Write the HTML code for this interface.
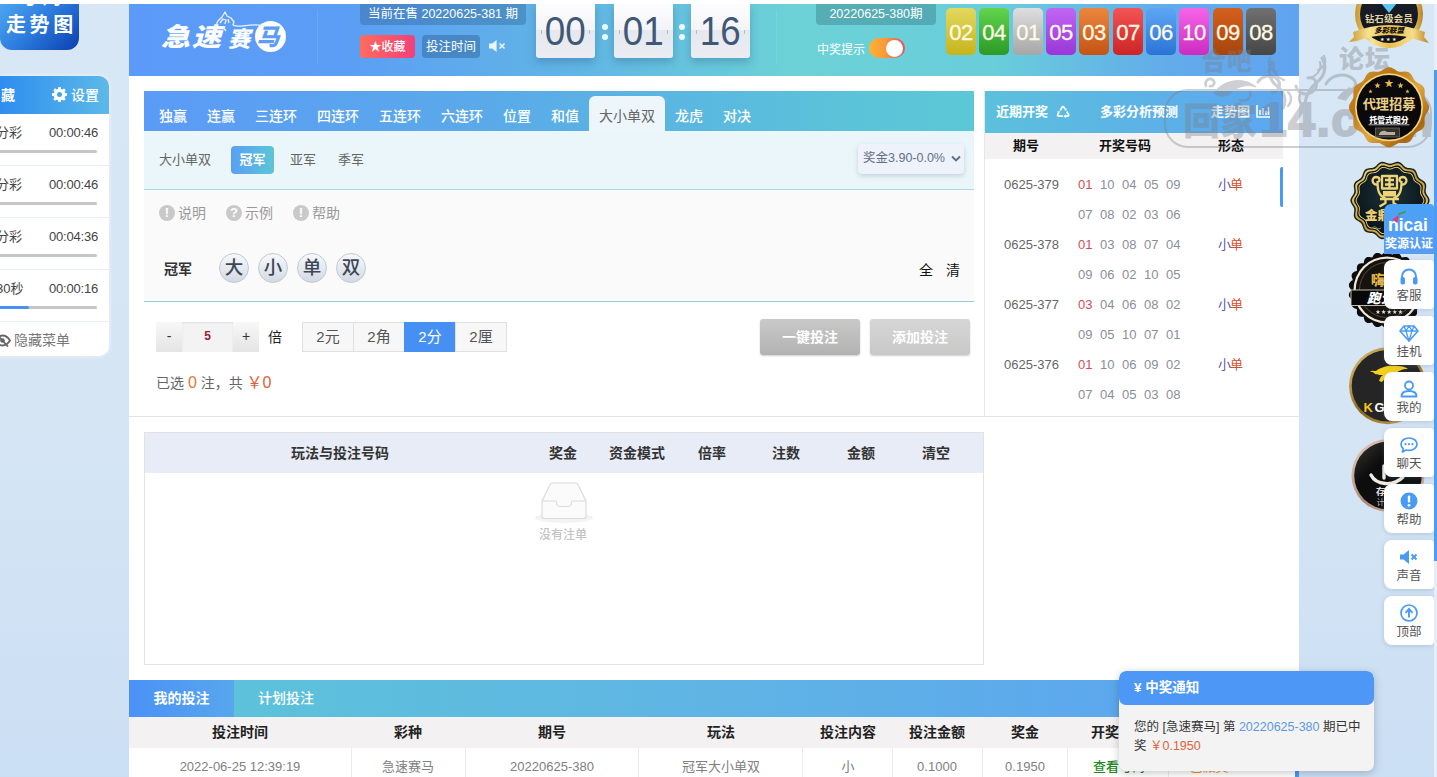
<!DOCTYPE html>
<html lang="zh-CN">
<head>
<meta charset="utf-8">
<title>急速赛马</title>
<style>
*{box-sizing:border-box;margin:0;padding:0}
html,body{width:1437px;height:777px;overflow:hidden}
body{background:linear-gradient(180deg,#d8e7f5 0%,#d5e5f4 55%,#cbdff4 100%);font-family:"Liberation Sans","Noto Sans CJK SC",sans-serif;font-size:14px;color:#555;position:relative}
.abs{position:absolute}
#topstrip{left:0;top:0;width:1437px;height:4px;background:#fff;z-index:5}
#main{left:129px;top:4px;width:1170px;height:773px;background:#fff}
/* header */
#hdr{left:129px;top:4px;width:1170px;height:72px;background:linear-gradient(90deg,#5c9af9 0%,#5b9ef5 18%,#61b5e5 38%,#6cd2d7 57%,#69cdda 74%,#62abeb 89%,#60a4ef 100%)}
#hdr .vline{position:absolute;top:6px;width:1px;height:54px;background:rgba(255,255,255,.1)}
.pill{position:absolute;top:0;height:21px;background:rgba(30,70,110,.28);border-radius:0 0 4px 4px;color:#fff;font-size:12.5px;line-height:20px;text-align:center;white-space:nowrap}
.tbox{position:absolute;top:0;width:59px;height:54px;border-radius:0 0 3px 3px;background:linear-gradient(180deg,#fdfdfe 0,#f4f4f8 48%,#e6e8ef 49%,#ebedf3 100%);box-shadow:0 4px 8px rgba(40,90,130,.35);color:#3f5875;font-size:40px;line-height:54px;text-align:center;letter-spacing:0}
.tbox u{display:inline-block;text-decoration:none;transform:scaleX(.92)}
.tbox:before,.tbox:after{content:"";position:absolute;top:26px;width:1px;height:4px;background:#b9bcc6}
.tbox:before{left:5px}.tbox:after{right:5px}
.colon{position:absolute;width:6px;height:6px;border-radius:50%;background:#e9fbff}
.ball{position:absolute;top:4px;width:30px;height:47px;border-radius:5px;color:#fffbe6;font-size:22px;line-height:49px;text-align:center;letter-spacing:-.5px;-webkit-text-stroke:.3px #fffbe6}

/* logo */
#logo{left:33px;top:17px;height:32px;color:#fff;font-weight:bold;font-style:italic;white-space:nowrap;font-family:"Liberation Sans","Noto Sans CJK SC",sans-serif}
#logo .a{position:absolute;left:-1px;top:0;font-size:29px;line-height:32px;letter-spacing:2px;font-weight:900;transform:scaleY(.88);transform-origin:0 55%}
#logo .b{position:absolute;left:66px;top:6px;font-size:22px;line-height:26px;font-weight:900}
#logo .c{position:absolute;left:93px;top:0;width:31px;height:31px;border-radius:50%;background:#fff;color:#5c9cf5;font-size:23px;line-height:32px;text-align:center;font-weight:900;text-indent:-5px}
.hbtn{position:absolute;top:31px;height:23px;border-radius:4px;color:#fff;font-size:12px;font-weight:500;line-height:24px;text-align:center;white-space:nowrap}
#tog{left:740px;top:34px;width:36px;height:20px;border-radius:10px;background:linear-gradient(90deg,#ffb22e 0,#f99a3a 45%,#df5560 100%)}
#tog i{position:absolute;right:2px;top:1.5px;width:17px;height:17px;border-radius:50%;background:#fff}
/* left */
#trend{left:0;top:0;width:79px;height:50px;border-radius:0 0 12px 12px;background:linear-gradient(135deg,#4fa8f0 0%,#2f7fe0 45%,#0a3fb0 100%);color:#fff;font-weight:bold;font-size:20px;letter-spacing:3.6px;overflow:hidden}
#lp{left:0;top:76px;width:109px;height:280px;background:#fff;border-radius:0 10px 10px 0;overflow:hidden;box-shadow:0 0 4px rgba(255,255,255,.7)}
#lp .h{position:absolute;left:0;top:0;width:109px;height:38px;background:linear-gradient(90deg,#2e8df0,#5cb9e8);color:#fff;font-weight:bold;font-size:14px;line-height:38px}
.lrow{position:absolute;left:0;width:109px;height:52px;border-bottom:1px solid #e8eef4;color:#444;font-size:13px}
.lrow .n{position:absolute;left:-4px;top:10px;line-height:18px}
.lrow .t{position:absolute;left:49px;top:10px;line-height:18px;letter-spacing:-.2px}
.lrow .p{position:absolute;left:-4px;top:36px;width:101px;height:3px;border-radius:2px;background:#c6c6c6}
/* bet panel */
#tabs{left:144px;top:91px;width:830px;height:40px;background:linear-gradient(90deg,#5b9bf7 0%,#5aaae9 42%,#5bc3d9 85%,#5cc8d6 100%);color:#fff;font-size:14px}
#tabs span{position:absolute;top:15px;line-height:20px;white-space:nowrap;font-weight:500;letter-spacing:0}
#tabs .act{position:absolute;left:445px;top:5px;width:76px;height:35px;background:#ecf6fb;border-radius:6px 6px 0 0}
#sub{left:144px;top:131px;width:830px;height:59px;background:#ebf6fa;border-bottom:1px solid #a6dbea;font-size:13px;color:#666}
#sub span{position:absolute;top:19px;line-height:20px;white-space:nowrap}
#sub .on{left:87px;top:15px;width:43px;height:28px;border-radius:4px;background:linear-gradient(90deg,#5b9ff5,#5cc5d6);color:#fff;font-weight:bold;line-height:28px;text-align:center}
#sel{left:858px;top:144px;width:106px;height:30px;border-radius:4px;background:#eef2fa;box-shadow:0 2px 5px rgba(120,140,170,.35);color:#66708a;font-size:12.5px;line-height:29px;padding-left:5px;white-space:nowrap}
#pick{left:144px;top:190px;width:830px;height:112px;background:#fafafa;border-bottom:1px solid #8fd0e0}
.tip{position:absolute;top:15px;height:16px;color:#999;font-size:14px;line-height:16px;white-space:nowrap}
.tip i{display:inline-block;width:16px;height:16px;border-radius:50%;background:#c9c9c9;color:#fff;font-style:normal;font-weight:bold;font-size:13px;line-height:16px;text-align:center;vertical-align:top;margin-right:3px}
.cb{position:absolute;top:63px;width:30px;height:30px;border-radius:50%;background:linear-gradient(180deg,#f6f8fb 0%,#e4e8ef 55%,#d3d9e3 100%);border:1px solid #c2c9d4;color:#3c4858;font-size:18.5px;font-weight:500;line-height:28px;text-align:center}
.mb{position:absolute;top:322px;height:30px;background:linear-gradient(180deg,#f8f8f8,#e4e4e4);color:#333;font-size:14px;line-height:29px;text-align:center}
.ub{position:absolute;top:322px;width:52px;height:30px;border:1px solid #e0e0e0;background:#f7f7f7;color:#555;font-size:15px;line-height:28px;text-align:center}
.gb{position:absolute;top:319px;width:100px;height:36px;border-radius:3px;color:#fff;font-weight:bold;font-size:14px;line-height:36px;text-align:center;box-shadow:0 1px 2px rgba(0,0,0,.2)}

/* right result panel */
#rp{left:984px;top:91px;width:299px;height:325px;border-left:1px solid #e6e6e6;overflow:hidden;background:#fff}
#rp .h{position:absolute;left:0;top:0;width:299px;height:42px;background:linear-gradient(90deg,#5cc0dc,#5ca6ef);color:#fff;font-weight:bold;font-size:13px;line-height:42px;white-space:nowrap}
#rp .c{position:absolute;left:0;top:42px;width:299px;height:26px;background:#f3f1f1;color:#111;font-weight:bold;font-size:13px;line-height:26px;white-space:nowrap}
#rp span{position:absolute}
.rr{position:absolute;left:0;width:299px;height:30px;font-size:13px;line-height:30px;color:#8a8f99;white-space:nowrap}
.rr .q{left:19px;color:#666}
.rr b{position:absolute;font-weight:normal}
.rr .r{color:#d0505a}
/* slip table */
#slip{left:144px;top:432px;width:840px;height:233px;border:1px solid #e2e2e2;background:#fff}
#slip .h{position:absolute;left:0;top:0;width:838px;height:40px;background:#e8ecf6;color:#333;font-weight:bold;font-size:14px;line-height:40px}
#slip .h span{position:absolute;transform:translateX(-50%);white-space:nowrap}
/* my bets */
#mb{left:129px;top:680px;width:1170px;height:37px;background:linear-gradient(90deg,#5cc5d8 0%,#5fb4e4 50%,#5ba2f2 100%);color:#fff;font-size:14px;line-height:37px;font-weight:500}
#mb .on{position:absolute;left:0;top:0;width:105px;height:37px;background:linear-gradient(90deg,#4a92f6,#58a6ee);text-align:center;font-weight:bold}
#mh{left:129px;top:717px;width:1170px;height:31px;background:#f3f1f1;color:#222;font-weight:bold;font-size:14px;line-height:31px}
#mh span,#mr span{position:absolute;transform:translateX(-50%);white-space:nowrap}
#mr{left:129px;top:748px;width:1170px;height:29px;background:#fff;color:#808080;font-size:13px;line-height:37px}
.vd{position:absolute;top:748px;width:1px;height:29px;background:#ececec}
/* notice */
#nt{z-index:4;left:1119px;top:671px;width:255px;height:100px;border-radius:7px;background:#f3f3f3;box-shadow:0 2px 8px rgba(0,0,0,.22);overflow:hidden;font-size:12.5px;color:#333}
#nt .h{height:34px;background:#4d97f7;border-radius:7px;color:#fff;font-weight:bold;font-size:13.5px;line-height:34px;padding-left:15px}

/* float buttons */
.fb{z-index:3;position:absolute;left:1384px;width:50px;height:49px;border-radius:8px 4px 4px 8px;background:#fff;box-shadow:0 1px 4px rgba(90,120,160,.28);color:#555;font-size:12.5px;text-align:center}
.fb svg{position:absolute;left:15px;top:7px}
.fb span{position:absolute;left:0;top:28px;width:50px;line-height:16px}
/* badges */
.bd{position:absolute;border-radius:50%;z-index:2}
.bd span{position:absolute;white-space:nowrap;transform:translateX(-50%);left:50%}
/* watermark */
#wm{left:1150px;top:40px;width:287px;height:120px;color:#7c7f86;fill:#7c7f86;opacity:.37;font-weight:900;pointer-events:none;overflow:hidden;z-index:1}
</style>
</head>
<body>
<div id="topstrip" class="abs"></div>
<div id="main" class="abs"></div>

<!-- ===== header ===== -->
<div id="hdr" class="abs">
  <div class="vline" style="left:188px"></div>
  <div class="vline" style="left:647px"></div>
  <div class="pill" style="left:231px;width:166px">当前在售 20220625-381 期</div>
  <div class="pill" style="left:687px;width:120px;background:rgba(30,80,90,.28)">20220625-380期</div>
  <div class="tbox" style="left:407px"><u>00</u></div>
  <div class="tbox" style="left:485px"><u>01</u></div>
  <div class="tbox" style="left:562px"><u>16</u></div>
  <div class="colon" style="left:473px;top:20px"></div><div class="colon" style="left:473px;top:30px"></div>
  <div class="colon" style="left:550px;top:20px"></div><div class="colon" style="left:550px;top:30px"></div>
  <div class="ball" style="left:817px;background:linear-gradient(#e2d860,#c6b41c)">02</div>
  <div class="ball" style="left:850px;background:linear-gradient(#62d44c,#2c9a26)">04</div>
  <div class="ball" style="left:884px;background:linear-gradient(#dedede,#a6a6a6)">01</div>
  <div class="ball" style="left:917px;background:linear-gradient(#c066f4,#9a36d8)">05</div>
  <div class="ball" style="left:950px;background:linear-gradient(#ec863e,#c45414)">03</div>
  <div class="ball" style="left:984px;background:linear-gradient(#f45454,#cc2424)">07</div>
  <div class="ball" style="left:1017px;background:linear-gradient(#5ea6f4,#2a74d6)">06</div>
  <div class="ball" style="left:1050px;background:linear-gradient(#f664e8,#cc2cc0)">10</div>
  <div class="ball" style="left:1084px;background:linear-gradient(#d4601c,#a8440e)">09</div>
  <div class="ball" style="left:1117px;background:linear-gradient(#707070,#464646)">08</div>
</div>


<!-- logo + header controls -->
<div class="abs" style="left:129px;top:4px;width:1170px;height:72px">
  <div id="logo" class="abs"><span class="a">急速</span><span class="b">赛</span><span class="c">马</span></div>
  <svg class="abs" style="left:83px;top:6px" width="60" height="22" viewBox="0 0 60 22"><path d="M3 17 L6 11 L10 7 L13 2 L15 6 L19 8 L22 12 L21 15 C28 19 38 12 52 16 M8 13 L11 9 L14 10 L13 14 M11 17 L14 21 M16 9 L17 13" fill="none" stroke="#eaf3ff" stroke-width="1.300" stroke-linejoin="round"/></svg>
  <div class="hbtn" style="left:231px;width:55px;background:linear-gradient(90deg,#ff6c5c,#f1407c)">★收藏</div>
  <div class="hbtn" style="left:293px;width:58px;background:rgba(40,90,140,.42);font-weight:normal;font-size:12.5px">投注时间</div>
  <svg class="abs" style="left:360px;top:35px" width="18" height="14" viewBox="0 0 18 14"><path d="M0 4.5h3.2L7.6 1v12L3.200 9.500H0z" fill="#e6f6ff"/><path d="M10.500 4.500l5 5m0-5l-5 5" stroke="#e6f6ff" stroke-width="1.600"/></svg>
  <div class="abs" style="left:688px;top:37px;color:#fff;font-size:12px;line-height:18px;white-space:nowrap">中奖提示</div>
  <div id="tog" class="abs"><i></i></div>
</div>

<!-- left column -->
<div id="trend" class="abs"><div class="abs" style="left:18px;top:-14px;line-height:22px;white-space:nowrap">号码</div><div class="abs" style="left:6px;top:13px;line-height:24px;white-space:nowrap">走势图</div></div>
<div id="lp" class="abs">
  <div class="h"><span class="abs" style="left:1px">藏</span>
    <svg class="abs" style="left:52px;top:11px" width="15" height="15" viewBox="0 0 16 16"><path fill="#fff" d="M6.700 0h2.600l.4 2.100 1.300.6 1.800-1.200 1.800 1.800-1.200 1.800.6 1.300 2.100.4v2.600l-2.100.4-.6 1.300 1.200 1.800-1.800 1.800-1.800-1.200-1.300.6-.4 2.100H6.700l-.4-2.100-1.300-.6-1.800 1.200-1.800-1.800 1.200-1.800-.6-1.300L0 9.300V6.700l2.100-.4.600-1.300L1.500 3.200l1.800-1.800 1.800 1.200 1.300-.6zM8 5.300a2.700 2.700 0 100 5.400 2.700 2.700 0 000-5.400z"/></svg>
    <span class="abs" style="left:71px;font-weight:500">设置</span></div>
  <div class="lrow" style="top:38px"><span class="n">分彩</span><span class="t">00:00:46</span><div class="p"></div></div>
  <div class="lrow" style="top:90px"><span class="n">分彩</span><span class="t">00:00:46</span><div class="p"></div></div>
  <div class="lrow" style="top:142px"><span class="n">分彩</span><span class="t">00:04:36</span><div class="p"></div></div>
  <div class="lrow" style="top:194px"><span class="n" style="left:-4px">30秒</span><span class="t">00:00:16</span><div class="p"><div style="width:33px;height:3px;background:#4a90f0;border-radius:2px"></div></div></div>
  <svg class="abs" style="left:-6px;top:258px" width="17" height="13" viewBox="0 0 17 13"><path d="M1 6.500C3.500 2.500 6 1.500 8.500 1.500S13.500 2.500 16 6.500C13.500 10.500 11 11.500 8.500 11.500S3.500 10.500 1 6.500z" fill="none" stroke="#666" stroke-width="1.800"/><circle cx="8.500" cy="6.500" r="2.300" fill="#666"/><path d="M3 0.500l11 12" stroke="#666" stroke-width="1.800"/></svg>
  <div class="abs" style="left:14px;top:254px;font-size:14px;color:#777;line-height:20px;white-space:nowrap">隐藏菜单</div>
</div>

<!-- bet panel -->
<div id="tabs" class="abs"><div class="act"></div>
  <span style="left:15px">独赢</span><span style="left:63px">连赢</span><span style="left:111px">三连环</span><span style="left:173px">四连环</span><span style="left:235px">五连环</span><span style="left:297px">六连环</span><span style="left:359px">位置</span><span style="left:407px">和值</span><span style="left:455px;color:#666;font-weight:normal">大小单双</span><span style="left:531px">龙虎</span><span style="left:579px">对决</span>
</div>
<div id="sub" class="abs"><span style="left:15px">大小单双</span><span class="on">冠军</span><span style="left:146px">亚军</span><span style="left:194px">季军</span></div>
<div id="sel" class="abs">奖金3.90-0.0%<svg class="abs" style="left:93px;top:11px" width="10" height="8" viewBox="0 0 10 8"><path d="M1 1.500l4 4 4-4" fill="none" stroke="#5f6e88" stroke-width="1.900"/></svg></div>
<div id="pick" class="abs">
  <div class="tip" style="left:15px"><i>!</i>说明</div>
  <div class="tip" style="left:82px"><i>?</i>示例</div>
  <div class="tip" style="left:149px"><i>!</i>帮助</div>
  <div class="abs" style="left:20px;top:69px;font-size:14px;font-weight:bold;color:#333;line-height:20px">冠军</div>
  <div class="cb" style="left:75px">大</div><div class="cb" style="left:114px">小</div><div class="cb" style="left:153px">单</div><div class="cb" style="left:192px">双</div>
  <div class="abs" style="left:775px;top:70px;font-size:14px;color:#111;line-height:20px;white-space:nowrap">全</div>
  <div class="abs" style="left:802px;top:70px;font-size:14px;color:#111;line-height:20px;white-space:nowrap">清</div>
</div>
<div class="mb" style="left:156px;width:26px">-</div>
<div class="mb" style="left:182px;width:51px;background:#f3f3f3;color:#9c1c3c;font-weight:bold;font-size:12px;box-shadow:inset 0 1px 2px rgba(0,0,0,.08)">5</div>
<div class="mb" style="left:233px;width:26px">+</div>
<div class="abs" style="left:268px;top:327px;font-size:14px;color:#222;line-height:20px">倍</div>
<div class="ub" style="left:302px">2元</div><div class="ub" style="left:353px">2角</div><div class="ub" style="left:404px;background:#4790f3;border-color:#4790f3;color:#fff">2分</div><div class="ub" style="left:455px">2厘</div>
<div class="gb" style="left:760px;background:linear-gradient(180deg,#c9c9c9,#b2b2b2)">一键投注</div>
<div class="gb" style="left:870px;background:linear-gradient(180deg,#d6d6d6,#c8c8c8)">添加投注</div>
<div class="abs" style="left:156px;top:373px;font-size:14px;color:#666;line-height:20px;white-space:nowrap">已选 <span style="color:#e07a3c;font-size:16px">0</span> 注，共 <span style="color:#e0603c;font-size:16px">￥0</span></div>
<div class="abs" style="left:129px;top:416px;width:1170px;height:1px;background:#e3e3e3"></div>

<!-- right result panel -->
<div id="rp" class="abs">
  <div class="h"><span style="left:11px">近期开奖</span><svg class="abs" style="left:71px;top:14px" width="14" height="14" viewBox="0 0 14 14"><path d="M4.200 5.500L6 2.300c.5-.8 1.500-.8 2 0l1 1.700M10.800 6.500l1.700 3c.4.800 0 1.700-1 1.700H9.500M7 11.200H2.700c-1 0-1.500-.9-1-1.700l1.200-2.100" fill="none" stroke="#fff" stroke-width="1.700"/><path d="M8.200 5.200l2.600.3-.6-2.600zM9.800 9.200v4l-2.300-2zM1.200 6.200l3 .2-1.800 2.200z" fill="#fff"/></svg>
    <span style="left:115px">多彩分析预测</span><span style="left:226px">走势图</span><svg class="abs" style="left:271px;top:14px" width="14" height="13" viewBox="0 0 14 13"><path d="M1 0v12h13" fill="none" stroke="#fff" stroke-width="1.600"/><path d="M4 5v5M7 3v7M10 6v4M12.500 2v8" stroke="#fff" stroke-width="1.500"/></svg></div>
  <div class="c"><span style="left:28px">期号</span><span style="left:114px">开奖号码</span><span style="left:233px">形态</span></div>
  <div class="rr" style="top:79px"><span class="q">0625-379</span><b class="r" style="left:93px">01</b><b style="left:115px">10</b><b style="left:137px">04</b><b style="left:159px">05</b><b style="left:181px">09</b><b style="left:233px;color:#5858b0">小</b><b style="left:245px;color:#d4502c">单</b></div>
  <div class="rr" style="top:109px"><b style="left:93px">07</b><b style="left:115px">08</b><b style="left:137px">02</b><b style="left:159px">03</b><b style="left:181px">06</b></div>
  <div class="rr" style="top:139px"><span class="q">0625-378</span><b class="r" style="left:93px">01</b><b style="left:115px">03</b><b style="left:137px">08</b><b style="left:159px">07</b><b style="left:181px">04</b><b style="left:233px;color:#5858b0">小</b><b style="left:245px;color:#d4502c">单</b></div>
  <div class="rr" style="top:169px"><b style="left:93px">09</b><b style="left:115px">06</b><b style="left:137px">02</b><b style="left:159px">10</b><b style="left:181px">05</b></div>
  <div class="rr" style="top:199px"><span class="q">0625-377</span><b class="r" style="left:93px">03</b><b style="left:115px">04</b><b style="left:137px">06</b><b style="left:159px">08</b><b style="left:181px">02</b><b style="left:233px;color:#5858b0">小</b><b style="left:245px;color:#d4502c">单</b></div>
  <div class="rr" style="top:229px"><b style="left:93px">09</b><b style="left:115px">05</b><b style="left:137px">10</b><b style="left:159px">07</b><b style="left:181px">01</b></div>
  <div class="rr" style="top:259px"><span class="q">0625-376</span><b class="r" style="left:93px">01</b><b style="left:115px">10</b><b style="left:137px">06</b><b style="left:159px">09</b><b style="left:181px">02</b><b style="left:233px;color:#5858b0">小</b><b style="left:245px;color:#d4502c">单</b></div>
  <div class="rr" style="top:289px"><b style="left:93px">07</b><b style="left:115px">04</b><b style="left:137px">05</b><b style="left:159px">03</b><b style="left:181px">08</b></div>
  <div class="abs" style="left:295px;top:76px;width:4px;height:40px;border-radius:2px;background:#4a9af5"></div>
</div>

<!-- bet slip -->
<div id="slip" class="abs">
  <div class="h"><span style="left:195px">玩法与投注号码</span><span style="left:418px">奖金</span><span style="left:492px">资金模式</span><span style="left:567px">倍率</span><span style="left:641px">注数</span><span style="left:716px">金额</span><span style="left:791px">清空</span></div>
  <svg class="abs" style="left:388px;top:46px" width="62" height="46" viewBox="0 0 62 46"><ellipse cx="31" cy="39" rx="29" ry="5" fill="#f3f3f3"/><path d="M9 22L17 5.500c.4-.9 1.200-1.500 2.200-1.500h23.600c1 0 1.800.6 2.200 1.500L53 22v15c0 1.400-1.100 2.500-2.500 2.500h-39C10.100 39.500 9 38.400 9 37z" fill="#fbfbfb" stroke="#dcdcdc" stroke-width="1.200"/><path d="M9 22h13c1 0 1.600.8 1.600 1.700 0 2 1.400 3.800 3.400 3.800h8c2 0 3.400-1.800 3.400-3.800 0-.9.600-1.700 1.600-1.700h13" fill="none" stroke="#dcdcdc" stroke-width="1.200"/></svg>
  <div class="abs" style="left:394px;top:93px;font-size:12px;color:#c2c2c2;line-height:18px;white-space:nowrap;font-weight:500">没有注单</div>
</div>

<!-- my bets -->
<div id="mb" class="abs"><div class="on">我的投注</div><span class="abs" style="left:129px">计划投注</span></div>
<div id="mh" class="abs"><span style="left:111px">投注时间</span><span style="left:279px">彩种</span><span style="left:423px">期号</span><span style="left:592px">玩法</span><span style="left:719px">投注内容</span><span style="left:808px">投注金额</span><span style="left:896px">奖金</span><span style="left:990px">开奖号码</span><span style="left:1102px">状态</span></div>
<div id="mr" class="abs"><span style="left:111px">2022-06-25 12:39:19</span><span style="left:279px">急速赛马</span><span style="left:423px">20220625-380</span><span style="left:592px">冠军大小单双</span><span style="left:719px">小</span><span style="left:808px">0.1000</span><span style="left:896px">0.1950</span><span style="left:990px;color:#1c8a1c;font-weight:500">查看号码</span><span style="left:1080px;color:#e8902c">已派奖</span></div>
<div class="vd" style="left:351px"></div><div class="vd" style="left:465px"></div><div class="vd" style="left:638px"></div><div class="vd" style="left:802px"></div><div class="vd" style="left:892px"></div><div class="vd" style="left:982px"></div><div class="vd" style="left:1067px"></div><div class="vd" style="left:1168px"></div>
<div class="abs" style="left:1295px;top:764px;width:4px;height:13px;background:#4a9af5"></div>

<!-- notice -->
<div id="nt" class="abs"><div class="h">¥ 中奖通知</div>
  <div class="abs" style="left:15px;top:47px;line-height:19px;white-space:nowrap">您的 [急速赛马] 第 <span style="color:#5b9ae0">20220625-380</span> 期已中<br>奖 <span style="color:#e0603c">￥0.1950</span></div>
</div>

<!-- badges -->
<svg class="abs" style="left:1345px;top:0;z-index:2" width="90" height="54" viewBox="1345 0 90 54">
  <defs><linearGradient id="g1" x1="0" y1="0" x2="1" y2="0"><stop offset="0" stop-color="#c8962c"/><stop offset=".25" stop-color="#f8e494"/><stop offset=".5" stop-color="#e8bc4c"/><stop offset=".8" stop-color="#f6dc88"/><stop offset="1" stop-color="#b88422"/></linearGradient>
  <linearGradient id="g2" x1="0" y1="0" x2="0" y2="1"><stop offset="0" stop-color="#1c2230"/><stop offset="1" stop-color="#101218"/></linearGradient></defs>
  <circle cx="1389" cy="14" r="34" fill="url(#g1)"/>
  <circle cx="1389" cy="14" r="29" fill="url(#g2)"/>
  <path d="M1381 3h16l-8 10z" fill="#5cc8f0"/>
  <path d="M1349 42l5-5-1-5q36-14 72 0l-1 5 5 6-8-2q-32-12-64 0z" fill="url(#g1)"/>
  <text x="1389" y="21.500" text-anchor="middle" font-size="9.300" font-weight="bold" fill="#e2d6a2" letter-spacing=".3" font-family="'Liberation Sans','Noto Sans CJK SC',sans-serif">钻石级会员</text>
  <text x="1389" y="32.800" text-anchor="middle" font-size="7.400" font-weight="900" font-style="italic" fill="#14100a" font-family="'Liberation Sans','Noto Sans CJK SC',sans-serif">多彩联盟</text>
  <text x="1389" y="41" text-anchor="middle" font-size="5" fill="#f4f0e0" letter-spacing="1.500" font-family="'DejaVu Sans',sans-serif">★★★</text>
</svg>

<svg class="abs" style="left:1347px;top:65px;z-index:2" width="86" height="86" viewBox="1347 65 86 86">
  <defs><linearGradient id="g3" x1="0" y1="0" x2="1" y2="1"><stop offset="0" stop-color="#d8a040"/><stop offset=".3" stop-color="#b87416"/><stop offset=".55" stop-color="#e0a844"/><stop offset=".8" stop-color="#a86812"/><stop offset="1" stop-color="#cc9030"/></linearGradient></defs>
  <path d="M1429.1 107.3L1429.0 108.3L1428.8 109.4L1428.4 110.4L1427.8 111.4L1427.3 112.3L1426.7 113.3L1426.1 114.2L1425.6 115.1L1425.1 116.0L1424.8 116.9L1424.6 117.9L1424.6 118.9L1424.6 119.9L1424.6 121.0L1424.7 122.1L1424.7 123.2L1424.6 124.3L1424.5 125.4L1424.2 126.4L1423.7 127.3L1423.1 128.2L1422.4 129.0L1421.5 129.7L1420.6 130.3L1419.6 130.8L1418.6 131.3L1417.7 131.8L1416.8 132.3L1416.0 132.9L1415.2 133.5L1414.6 134.3L1414.0 135.1L1413.5 136.0L1413.0 136.9L1412.5 137.9L1412.0 138.9L1411.4 139.8L1410.7 140.7L1409.9 141.4L1409.0 142.0L1408.1 142.5L1407.1 142.8L1406.0 142.9L1404.9 143.0L1403.8 143.0L1402.7 142.9L1401.6 142.9L1400.6 142.9L1399.6 142.9L1398.6 143.1L1397.7 143.4L1396.8 143.9L1395.9 144.4L1395.0 145.0L1394.0 145.6L1393.1 146.1L1392.1 146.7L1391.1 147.1L1390.0 147.3L1389.0 147.4L1388.0 147.3L1386.9 147.1L1385.9 146.7L1384.9 146.1L1384.0 145.6L1383.0 145.0L1382.1 144.4L1381.2 143.9L1380.3 143.4L1379.4 143.1L1378.4 142.9L1377.4 142.9L1376.4 142.9L1375.3 142.9L1374.2 143.0L1373.1 143.0L1372.0 142.9L1370.9 142.8L1369.9 142.5L1369.0 142.0L1368.1 141.4L1367.3 140.7L1366.6 139.8L1366.0 138.9L1365.5 137.9L1365.0 136.9L1364.5 136.0L1364.0 135.1L1363.4 134.3L1362.8 133.5L1362.0 132.9L1361.2 132.3L1360.3 131.8L1359.4 131.3L1358.4 130.8L1357.4 130.3L1356.5 129.7L1355.6 129.0L1354.9 128.2L1354.3 127.3L1353.8 126.4L1353.5 125.4L1353.4 124.3L1353.3 123.2L1353.3 122.1L1353.4 121.0L1353.4 119.9L1353.4 118.9L1353.4 117.9L1353.2 116.9L1352.9 116.0L1352.4 115.1L1351.9 114.2L1351.3 113.3L1350.7 112.3L1350.2 111.4L1349.6 110.4L1349.2 109.4L1349.0 108.3L1348.9 107.3L1349.0 106.3L1349.2 105.2L1349.6 104.2L1350.2 103.2L1350.7 102.3L1351.3 101.3L1351.9 100.4L1352.4 99.5L1352.9 98.6L1353.2 97.7L1353.4 96.7L1353.4 95.7L1353.4 94.7L1353.4 93.6L1353.3 92.5L1353.3 91.4L1353.4 90.3L1353.5 89.2L1353.8 88.2L1354.3 87.2L1354.9 86.4L1355.6 85.6L1356.5 84.9L1357.4 84.3L1358.4 83.8L1359.4 83.3L1360.3 82.8L1361.2 82.3L1362.0 81.7L1362.8 81.1L1363.4 80.3L1364.0 79.5L1364.5 78.6L1365.0 77.7L1365.5 76.7L1366.0 75.7L1366.6 74.8L1367.3 73.9L1368.1 73.2L1369.0 72.6L1369.9 72.1L1370.9 71.8L1372.0 71.7L1373.1 71.6L1374.2 71.6L1375.3 71.7L1376.4 71.7L1377.4 71.7L1378.4 71.7L1379.4 71.5L1380.3 71.2L1381.2 70.7L1382.1 70.2L1383.0 69.6L1384.0 69.0L1384.9 68.5L1385.9 67.9L1386.9 67.5L1388.0 67.3L1389.0 67.2L1390.0 67.3L1391.1 67.5L1392.1 67.9L1393.1 68.5L1394.0 69.0L1395.0 69.6L1395.9 70.2L1396.8 70.7L1397.7 71.2L1398.6 71.5L1399.6 71.7L1400.6 71.7L1401.6 71.7L1402.7 71.7L1403.8 71.6L1404.9 71.6L1406.0 71.7L1407.1 71.8L1408.1 72.1L1409.0 72.6L1409.9 73.2L1410.7 73.9L1411.4 74.8L1412.0 75.7L1412.5 76.7L1413.0 77.7L1413.5 78.6L1414.0 79.5L1414.6 80.3L1415.2 81.1L1416.0 81.7L1416.8 82.3L1417.7 82.8L1418.6 83.3L1419.6 83.8L1420.6 84.3L1421.5 84.9L1422.4 85.6L1423.1 86.4L1423.7 87.3L1424.2 88.2L1424.5 89.2L1424.6 90.3L1424.7 91.4L1424.7 92.5L1424.6 93.6L1424.6 94.7L1424.6 95.7L1424.6 96.7L1424.8 97.7L1425.1 98.6L1425.6 99.5L1426.1 100.4L1426.7 101.3L1427.3 102.3L1427.8 103.2L1428.4 104.2L1428.8 105.2L1429.0 106.3z" fill="url(#g3)"/>
  <circle cx="1389" cy="107.300" r="34" fill="#f4d678"/>
  <circle cx="1389" cy="107.300" r="32.300" fill="#0a0a0c"/>
  <path d="M1389.0 78.9L1390.1 81.9L1393.4 82.1L1390.8 84.1L1391.7 87.2L1389.0 85.4L1386.3 87.2L1387.2 84.1L1384.6 82.1L1387.9 81.9zM1377.5 82.2L1378.3 84.4L1380.6 84.5L1378.8 85.9L1379.4 88.2L1377.5 86.9L1375.6 88.2L1376.2 85.9L1374.4 84.5L1376.7 84.4zM1400.5 82.2L1401.3 84.4L1403.6 84.5L1401.8 85.9L1402.4 88.2L1400.5 86.9L1398.6 88.2L1399.2 85.9L1397.4 84.5L1399.7 84.4zM1370.5 89.3L1371.0 90.8L1372.6 90.8L1371.4 91.8L1371.8 93.3L1370.5 92.4L1369.2 93.3L1369.6 91.8L1368.4 90.8L1370.0 90.8zM1407.5 89.3L1408.0 90.8L1409.6 90.8L1408.4 91.8L1408.8 93.3L1407.5 92.4L1406.2 93.3L1406.6 91.8L1405.4 90.8L1407.0 90.8z" fill="#e4b64e"/>
  <text x="1389" y="108.600" text-anchor="middle" font-size="13.200" font-weight="bold" fill="#ecd088" font-family="'Liberation Sans','Noto Sans CJK SC',sans-serif">代理招募</text>
  <text x="1389" y="123.300" text-anchor="middle" font-size="7.800" font-weight="900" fill="#fff" font-family="'Liberation Sans','Noto Sans CJK SC',sans-serif">托管式跑分</text>
  <path d="M1368.500 124.800h41" stroke="#ddd" stroke-width=".8"/>
  <rect x="1375.500" y="128" width="24" height="9" fill="#34322c" stroke="#77736a" stroke-width=".7"/>
  <path d="M1379 134c2-4 6-4 8-2h8v3h-16z" fill="#b8b09c"/>
</svg>

<svg class="abs" style="left:1348px;top:158px;z-index:2" width="86" height="86" viewBox="1348 158 86 86">
  <defs><linearGradient id="g4" x1="0" y1="0" x2="1" y2="1"><stop offset="0" stop-color="#f4e08c"/><stop offset=".5" stop-color="#c89c34"/><stop offset="1" stop-color="#f0d880"/></linearGradient>
  <radialGradient id="g5" cx=".5" cy=".4" r=".6"><stop offset="0" stop-color="#1c3436"/><stop offset="1" stop-color="#0a121c"/></radialGradient></defs>
  <path d="M1429.6 200.5L1429.5 201.5L1429.2 202.6L1428.7 203.5L1428.1 204.5L1427.5 205.4L1426.9 206.3L1426.4 207.2L1426.0 208.2L1425.8 209.1L1425.7 210.1L1425.8 211.1L1425.9 212.2L1426.1 213.3L1426.2 214.4L1426.2 215.5L1426.1 216.6L1425.7 217.5L1425.2 218.4L1424.5 219.2L1423.7 219.9L1422.8 220.6L1421.8 221.1L1420.9 221.7L1420.0 222.3L1419.2 222.9L1418.6 223.7L1418.1 224.5L1417.7 225.4L1417.3 226.4L1417.0 227.5L1416.6 228.6L1416.2 229.6L1415.6 230.5L1414.9 231.3L1414.1 231.9L1413.1 232.3L1412.1 232.6L1411.0 232.8L1409.8 232.9L1408.8 233.0L1407.7 233.1L1406.7 233.4L1405.8 233.7L1405.0 234.2L1404.2 234.9L1403.5 235.6L1402.7 236.4L1401.9 237.2L1401.1 238.0L1400.2 238.6L1399.2 239.0L1398.2 239.2L1397.2 239.2L1396.1 239.0L1395.0 238.7L1394.0 238.3L1392.9 237.9L1391.9 237.6L1391.0 237.4L1390.0 237.3L1389.0 237.4L1388.1 237.6L1387.1 237.9L1386.0 238.3L1385.0 238.7L1383.9 239.0L1382.8 239.2L1381.8 239.2L1380.8 239.0L1379.8 238.6L1378.9 238.0L1378.1 237.2L1377.3 236.4L1376.5 235.6L1375.8 234.9L1375.0 234.2L1374.2 233.7L1373.3 233.4L1372.3 233.1L1371.2 233.0L1370.2 232.9L1369.0 232.8L1367.9 232.6L1366.9 232.3L1365.9 231.9L1365.1 231.3L1364.4 230.5L1363.8 229.6L1363.4 228.6L1363.0 227.5L1362.7 226.4L1362.3 225.4L1361.9 224.5L1361.4 223.7L1360.8 222.9L1360.0 222.3L1359.1 221.7L1358.2 221.1L1357.2 220.6L1356.3 219.9L1355.5 219.2L1354.8 218.4L1354.3 217.5L1353.9 216.6L1353.8 215.5L1353.8 214.4L1353.9 213.3L1354.1 212.2L1354.2 211.1L1354.3 210.1L1354.2 209.1L1354.0 208.2L1353.6 207.2L1353.1 206.3L1352.5 205.4L1351.9 204.5L1351.3 203.5L1350.8 202.6L1350.5 201.5L1350.4 200.5L1350.5 199.5L1350.8 198.4L1351.3 197.5L1351.9 196.5L1352.5 195.6L1353.1 194.7L1353.6 193.8L1354.0 192.8L1354.2 191.9L1354.3 190.9L1354.2 189.9L1354.1 188.8L1353.9 187.7L1353.8 186.6L1353.8 185.5L1353.9 184.4L1354.3 183.5L1354.8 182.6L1355.5 181.8L1356.3 181.1L1357.2 180.4L1358.2 179.9L1359.1 179.3L1360.0 178.7L1360.8 178.1L1361.4 177.3L1361.9 176.5L1362.3 175.6L1362.7 174.6L1363.0 173.5L1363.4 172.4L1363.8 171.4L1364.4 170.5L1365.1 169.7L1365.9 169.1L1366.9 168.7L1367.9 168.4L1369.0 168.2L1370.2 168.1L1371.2 168.0L1372.3 167.9L1373.3 167.6L1374.2 167.3L1375.0 166.8L1375.8 166.1L1376.5 165.4L1377.3 164.6L1378.1 163.8L1378.9 163.0L1379.8 162.4L1380.8 162.0L1381.8 161.8L1382.8 161.8L1383.9 162.0L1385.0 162.3L1386.0 162.7L1387.1 163.1L1388.1 163.4L1389.0 163.6L1390.0 163.7L1391.0 163.6L1391.9 163.4L1392.9 163.1L1394.0 162.7L1395.0 162.3L1396.1 162.0L1397.2 161.8L1398.2 161.8L1399.2 162.0L1400.2 162.4L1401.1 163.0L1401.9 163.8L1402.7 164.6L1403.5 165.4L1404.2 166.1L1405.0 166.8L1405.8 167.3L1406.7 167.6L1407.7 167.9L1408.8 168.0L1409.8 168.1L1411.0 168.2L1412.1 168.4L1413.1 168.7L1414.1 169.1L1414.9 169.7L1415.6 170.5L1416.2 171.4L1416.6 172.4L1417.0 173.5L1417.3 174.6L1417.7 175.6L1418.1 176.5L1418.6 177.3L1419.2 178.1L1420.0 178.7L1420.9 179.3L1421.8 179.9L1422.8 180.4L1423.7 181.1L1424.5 181.8L1425.2 182.6L1425.7 183.5L1426.1 184.4L1426.2 185.5L1426.2 186.6L1426.1 187.7L1425.9 188.8L1425.8 189.9L1425.7 190.9L1425.8 191.9L1426.0 192.8L1426.4 193.8L1426.9 194.7L1427.5 195.6L1428.1 196.5L1428.7 197.5L1429.2 198.4L1429.5 199.5z" fill="#18241c"/>
  <path d="M1428.0 200.5L1427.9 201.5L1427.6 202.5L1427.1 203.4L1426.5 204.3L1425.9 205.2L1425.3 206.1L1424.8 207.0L1424.5 207.8L1424.2 208.7L1424.2 209.7L1424.2 210.6L1424.4 211.7L1424.6 212.7L1424.7 213.8L1424.7 214.9L1424.6 215.9L1424.3 216.9L1423.8 217.7L1423.1 218.5L1422.3 219.2L1421.4 219.7L1420.5 220.3L1419.5 220.8L1418.7 221.3L1418.0 222.0L1417.4 222.7L1416.9 223.5L1416.5 224.4L1416.2 225.3L1415.9 226.4L1415.5 227.4L1415.1 228.4L1414.6 229.3L1413.9 230.0L1413.1 230.6L1412.2 231.0L1411.2 231.3L1410.1 231.4L1409.0 231.5L1408.0 231.6L1406.9 231.7L1406.0 231.9L1405.2 232.3L1404.4 232.8L1403.6 233.4L1402.9 234.1L1402.2 234.9L1401.4 235.7L1400.6 236.4L1399.8 237.0L1398.9 237.4L1397.9 237.6L1396.9 237.6L1395.9 237.5L1394.8 237.1L1393.8 236.8L1392.8 236.4L1391.9 236.0L1390.9 235.8L1390.0 235.7L1389.1 235.8L1388.1 236.0L1387.2 236.4L1386.2 236.8L1385.2 237.1L1384.1 237.5L1383.1 237.6L1382.1 237.6L1381.1 237.4L1380.2 237.0L1379.4 236.4L1378.6 235.7L1377.8 234.9L1377.1 234.1L1376.4 233.4L1375.6 232.8L1374.8 232.3L1374.0 231.9L1373.1 231.7L1372.0 231.6L1371.0 231.5L1369.9 231.4L1368.8 231.3L1367.8 231.0L1366.9 230.6L1366.1 230.0L1365.4 229.3L1364.9 228.4L1364.5 227.4L1364.1 226.4L1363.8 225.3L1363.5 224.4L1363.1 223.5L1362.6 222.7L1362.0 222.0L1361.3 221.3L1360.5 220.8L1359.5 220.3L1358.6 219.7L1357.7 219.2L1356.9 218.5L1356.2 217.7L1355.7 216.9L1355.4 215.9L1355.3 214.9L1355.3 213.8L1355.4 212.7L1355.6 211.7L1355.8 210.6L1355.8 209.7L1355.8 208.7L1355.5 207.8L1355.2 207.0L1354.7 206.1L1354.1 205.2L1353.5 204.3L1352.9 203.4L1352.4 202.5L1352.1 201.5L1352.0 200.5L1352.1 199.5L1352.4 198.5L1352.9 197.6L1353.5 196.7L1354.1 195.8L1354.7 194.9L1355.2 194.0L1355.5 193.2L1355.8 192.3L1355.8 191.3L1355.8 190.4L1355.6 189.3L1355.4 188.3L1355.3 187.2L1355.3 186.1L1355.4 185.1L1355.7 184.1L1356.2 183.3L1356.9 182.5L1357.7 181.9L1358.6 181.3L1359.5 180.7L1360.5 180.2L1361.3 179.7L1362.0 179.0L1362.6 178.3L1363.1 177.5L1363.5 176.6L1363.8 175.7L1364.1 174.6L1364.5 173.6L1364.9 172.6L1365.4 171.7L1366.1 171.0L1366.9 170.4L1367.8 170.0L1368.8 169.7L1369.9 169.6L1371.0 169.5L1372.0 169.4L1373.1 169.3L1374.0 169.1L1374.8 168.7L1375.6 168.2L1376.4 167.6L1377.1 166.9L1377.8 166.1L1378.6 165.3L1379.4 164.6L1380.2 164.0L1381.1 163.6L1382.1 163.4L1383.1 163.4L1384.1 163.5L1385.2 163.9L1386.2 164.2L1387.2 164.6L1388.1 165.0L1389.1 165.2L1390.0 165.3L1390.9 165.2L1391.9 165.0L1392.8 164.6L1393.8 164.2L1394.8 163.9L1395.9 163.5L1396.9 163.4L1397.9 163.4L1398.9 163.6L1399.8 164.0L1400.6 164.6L1401.4 165.3L1402.2 166.1L1402.9 166.9L1403.6 167.6L1404.4 168.2L1405.2 168.7L1406.0 169.1L1406.9 169.3L1408.0 169.4L1409.0 169.5L1410.1 169.6L1411.2 169.7L1412.2 170.0L1413.1 170.4L1413.9 171.0L1414.6 171.7L1415.1 172.6L1415.5 173.6L1415.9 174.6L1416.2 175.7L1416.5 176.6L1416.9 177.5L1417.4 178.3L1418.0 179.0L1418.7 179.7L1419.5 180.2L1420.5 180.7L1421.4 181.3L1422.3 181.9L1423.1 182.5L1423.8 183.3L1424.3 184.1L1424.6 185.1L1424.7 186.1L1424.7 187.2L1424.6 188.3L1424.4 189.3L1424.2 190.4L1424.2 191.3L1424.2 192.3L1424.5 193.2L1424.8 194.0L1425.3 194.9L1425.9 195.8L1426.5 196.7L1427.1 197.6L1427.6 198.5L1427.9 199.5z" fill="url(#g4)"/>
  <path d="M1425.9 200.5L1425.8 201.4L1425.5 202.4L1425.1 203.3L1424.5 204.1L1424.0 205.0L1423.4 205.8L1422.9 206.6L1422.6 207.4L1422.4 208.3L1422.3 209.2L1422.4 210.1L1422.5 211.1L1422.7 212.1L1422.8 213.1L1422.8 214.1L1422.7 215.1L1422.4 216.0L1421.9 216.8L1421.3 217.5L1420.5 218.1L1419.7 218.7L1418.8 219.2L1417.9 219.7L1417.1 220.2L1416.5 220.8L1415.9 221.5L1415.4 222.2L1415.1 223.1L1414.8 224.0L1414.5 225.0L1414.1 225.9L1413.7 226.9L1413.2 227.7L1412.6 228.4L1411.8 228.9L1411.0 229.3L1410.0 229.6L1409.0 229.7L1408.0 229.8L1407.0 229.9L1406.0 230.0L1405.1 230.2L1404.3 230.6L1403.6 231.0L1402.9 231.6L1402.2 232.3L1401.5 233.1L1400.8 233.8L1400.1 234.5L1399.2 235.0L1398.4 235.4L1397.5 235.6L1396.5 235.6L1395.5 235.4L1394.6 235.1L1393.6 234.8L1392.7 234.4L1391.8 234.1L1390.9 233.9L1390.0 233.8L1389.1 233.9L1388.2 234.1L1387.3 234.4L1386.4 234.8L1385.4 235.1L1384.5 235.4L1383.5 235.6L1382.5 235.6L1381.6 235.4L1380.8 235.0L1379.9 234.5L1379.2 233.8L1378.5 233.1L1377.8 232.3L1377.1 231.6L1376.4 231.0L1375.7 230.6L1374.9 230.2L1374.0 230.0L1373.0 229.9L1372.0 229.8L1371.0 229.7L1370.0 229.6L1369.0 229.3L1368.2 228.9L1367.4 228.4L1366.8 227.7L1366.3 226.9L1365.9 225.9L1365.5 225.0L1365.2 224.0L1364.9 223.1L1364.6 222.2L1364.1 221.5L1363.5 220.8L1362.9 220.2L1362.1 219.7L1361.2 219.2L1360.3 218.7L1359.5 218.1L1358.7 217.5L1358.1 216.8L1357.6 216.0L1357.3 215.1L1357.2 214.1L1357.2 213.1L1357.3 212.1L1357.5 211.1L1357.6 210.1L1357.7 209.2L1357.6 208.3L1357.4 207.4L1357.1 206.6L1356.6 205.8L1356.0 205.0L1355.5 204.1L1354.9 203.3L1354.5 202.4L1354.2 201.4L1354.1 200.5L1354.2 199.6L1354.5 198.6L1354.9 197.7L1355.5 196.9L1356.0 196.0L1356.6 195.2L1357.1 194.4L1357.4 193.6L1357.6 192.7L1357.7 191.8L1357.6 190.9L1357.5 189.9L1357.3 188.9L1357.2 187.9L1357.2 186.9L1357.3 185.9L1357.6 185.0L1358.1 184.2L1358.7 183.5L1359.5 182.9L1360.3 182.3L1361.2 181.8L1362.1 181.3L1362.9 180.8L1363.5 180.2L1364.1 179.5L1364.6 178.8L1364.9 177.9L1365.2 177.0L1365.5 176.0L1365.9 175.1L1366.3 174.1L1366.8 173.3L1367.4 172.6L1368.2 172.1L1369.0 171.7L1370.0 171.4L1371.0 171.3L1372.0 171.2L1373.0 171.1L1374.0 171.0L1374.9 170.8L1375.7 170.4L1376.4 170.0L1377.1 169.4L1377.8 168.7L1378.5 167.9L1379.2 167.2L1379.9 166.5L1380.8 166.0L1381.6 165.6L1382.5 165.4L1383.5 165.4L1384.5 165.6L1385.4 165.9L1386.4 166.2L1387.3 166.6L1388.2 166.9L1389.1 167.1L1390.0 167.2L1390.9 167.1L1391.8 166.9L1392.7 166.6L1393.6 166.2L1394.6 165.9L1395.5 165.6L1396.5 165.4L1397.5 165.4L1398.4 165.6L1399.2 166.0L1400.1 166.5L1400.8 167.2L1401.5 167.9L1402.2 168.7L1402.9 169.4L1403.6 170.0L1404.3 170.4L1405.1 170.8L1406.0 171.0L1407.0 171.1L1408.0 171.2L1409.0 171.3L1410.0 171.4L1411.0 171.7L1411.8 172.1L1412.6 172.6L1413.2 173.3L1413.7 174.1L1414.1 175.1L1414.5 176.0L1414.8 177.0L1415.1 177.9L1415.4 178.8L1415.9 179.5L1416.5 180.2L1417.1 180.8L1417.9 181.3L1418.8 181.8L1419.7 182.3L1420.5 182.9L1421.3 183.5L1421.9 184.2L1422.4 185.0L1422.7 185.9L1422.8 186.9L1422.8 187.9L1422.7 188.9L1422.5 189.9L1422.4 190.9L1422.3 191.8L1422.4 192.7L1422.6 193.6L1422.9 194.4L1423.4 195.2L1424.0 196.0L1424.5 196.9L1425.1 197.7L1425.5 198.6L1425.8 199.6z" fill="#0c141a"/>
  <path d="M1424.4 200.5L1424.3 201.4L1424.0 202.3L1423.6 203.1L1423.1 204.0L1422.6 204.8L1422.1 205.6L1421.7 206.4L1421.3 207.2L1421.1 208.0L1421.1 208.8L1421.1 209.7L1421.2 210.6L1421.4 211.6L1421.5 212.6L1421.5 213.5L1421.3 214.4L1421.0 215.3L1420.6 216.1L1420.0 216.8L1419.3 217.4L1418.5 217.9L1417.6 218.4L1416.8 218.9L1416.1 219.4L1415.4 220.0L1414.9 220.6L1414.4 221.4L1414.1 222.2L1413.8 223.1L1413.5 224.0L1413.1 224.9L1412.8 225.8L1412.3 226.6L1411.6 227.2L1410.9 227.8L1410.1 228.1L1409.2 228.4L1408.2 228.6L1407.2 228.6L1406.3 228.7L1405.4 228.9L1404.6 229.1L1403.8 229.4L1403.1 229.8L1402.4 230.4L1401.7 231.0L1401.1 231.7L1400.4 232.4L1399.6 233.1L1398.9 233.6L1398.0 233.9L1397.1 234.1L1396.2 234.1L1395.3 234.0L1394.4 233.7L1393.5 233.4L1392.6 233.1L1391.7 232.8L1390.8 232.6L1390.0 232.5L1389.2 232.6L1388.3 232.8L1387.4 233.1L1386.5 233.4L1385.6 233.7L1384.7 234.0L1383.8 234.1L1382.9 234.1L1382.0 233.9L1381.1 233.6L1380.4 233.1L1379.6 232.4L1378.9 231.7L1378.3 231.0L1377.6 230.4L1376.9 229.8L1376.2 229.4L1375.4 229.1L1374.6 228.9L1373.7 228.7L1372.8 228.6L1371.8 228.6L1370.8 228.4L1369.9 228.1L1369.1 227.8L1368.4 227.2L1367.7 226.6L1367.2 225.8L1366.9 224.9L1366.5 224.0L1366.2 223.1L1365.9 222.2L1365.6 221.4L1365.1 220.6L1364.6 220.0L1363.9 219.4L1363.2 218.9L1362.4 218.4L1361.5 217.9L1360.7 217.4L1360.0 216.8L1359.4 216.1L1359.0 215.3L1358.7 214.4L1358.5 213.5L1358.5 212.6L1358.6 211.6L1358.8 210.6L1358.9 209.7L1358.9 208.8L1358.9 208.0L1358.7 207.2L1358.3 206.4L1357.9 205.6L1357.4 204.8L1356.9 204.0L1356.4 203.1L1356.0 202.3L1355.7 201.4L1355.6 200.5L1355.7 199.6L1356.0 198.7L1356.4 197.9L1356.9 197.0L1357.4 196.2L1357.9 195.4L1358.3 194.6L1358.7 193.8L1358.9 193.0L1358.9 192.2L1358.9 191.3L1358.8 190.4L1358.6 189.4L1358.5 188.4L1358.5 187.5L1358.7 186.6L1359.0 185.7L1359.4 184.9L1360.0 184.2L1360.7 183.6L1361.5 183.1L1362.4 182.6L1363.2 182.1L1363.9 181.6L1364.6 181.0L1365.1 180.4L1365.6 179.6L1365.9 178.8L1366.2 177.9L1366.5 177.0L1366.9 176.1L1367.2 175.2L1367.7 174.4L1368.4 173.8L1369.1 173.2L1369.9 172.9L1370.8 172.6L1371.8 172.4L1372.8 172.4L1373.7 172.3L1374.6 172.1L1375.4 171.9L1376.2 171.6L1376.9 171.2L1377.6 170.6L1378.3 170.0L1378.9 169.3L1379.6 168.6L1380.4 167.9L1381.1 167.4L1382.0 167.1L1382.9 166.9L1383.8 166.9L1384.7 167.0L1385.6 167.3L1386.5 167.6L1387.4 167.9L1388.3 168.2L1389.2 168.4L1390.0 168.5L1390.8 168.4L1391.7 168.2L1392.6 167.9L1393.5 167.6L1394.4 167.3L1395.3 167.0L1396.2 166.9L1397.1 166.9L1398.0 167.1L1398.9 167.4L1399.6 167.9L1400.4 168.6L1401.1 169.3L1401.7 170.0L1402.4 170.6L1403.1 171.2L1403.8 171.6L1404.6 171.9L1405.4 172.1L1406.3 172.3L1407.2 172.4L1408.2 172.4L1409.2 172.6L1410.1 172.9L1410.9 173.2L1411.6 173.8L1412.3 174.4L1412.8 175.2L1413.1 176.1L1413.5 177.0L1413.8 177.9L1414.1 178.8L1414.4 179.6L1414.9 180.4L1415.4 181.0L1416.1 181.6L1416.8 182.1L1417.6 182.6L1418.5 183.1L1419.3 183.6L1420.0 184.2L1420.6 184.9L1421.0 185.7L1421.3 186.6L1421.5 187.5L1421.5 188.4L1421.4 189.4L1421.2 190.4L1421.1 191.3L1421.1 192.2L1421.1 193.0L1421.3 193.8L1421.7 194.6L1422.1 195.4L1422.6 196.2L1423.1 197.0L1423.6 197.9L1424.0 198.7L1424.3 199.6z" fill="#e8cc6c"/>
  <path d="M1423.4 200.5L1423.3 201.4L1423.0 202.2L1422.6 203.1L1422.1 203.9L1421.6 204.7L1421.1 205.4L1420.7 206.2L1420.3 207.0L1420.2 207.7L1420.1 208.6L1420.1 209.4L1420.3 210.3L1420.4 211.3L1420.5 212.2L1420.5 213.1L1420.4 214.0L1420.1 214.9L1419.7 215.6L1419.1 216.3L1418.4 216.9L1417.6 217.4L1416.8 217.9L1416.0 218.4L1415.3 218.9L1414.6 219.4L1414.1 220.0L1413.7 220.7L1413.3 221.5L1413.0 222.4L1412.8 223.3L1412.5 224.2L1412.1 225.0L1411.6 225.8L1411.0 226.5L1410.3 227.0L1409.5 227.3L1408.6 227.6L1407.7 227.7L1406.7 227.8L1405.8 227.9L1404.9 228.0L1404.1 228.2L1403.3 228.5L1402.7 228.9L1402.0 229.5L1401.4 230.1L1400.7 230.8L1400.1 231.5L1399.4 232.1L1398.6 232.6L1397.8 233.0L1396.9 233.1L1396.1 233.2L1395.1 233.0L1394.2 232.7L1393.4 232.4L1392.5 232.1L1391.6 231.8L1390.8 231.6L1390.0 231.5L1389.2 231.6L1388.4 231.8L1387.5 232.1L1386.6 232.4L1385.8 232.7L1384.9 233.0L1383.9 233.2L1383.1 233.1L1382.2 233.0L1381.4 232.6L1380.6 232.1L1379.9 231.5L1379.3 230.8L1378.6 230.1L1378.0 229.5L1377.3 228.9L1376.7 228.5L1375.9 228.2L1375.1 228.0L1374.2 227.9L1373.3 227.8L1372.3 227.7L1371.4 227.6L1370.5 227.3L1369.7 227.0L1369.0 226.5L1368.4 225.8L1367.9 225.0L1367.5 224.2L1367.2 223.3L1367.0 222.4L1366.7 221.5L1366.3 220.7L1365.9 220.0L1365.4 219.4L1364.7 218.9L1364.0 218.4L1363.2 217.9L1362.4 217.4L1361.6 216.9L1360.9 216.3L1360.3 215.6L1359.9 214.9L1359.6 214.0L1359.5 213.1L1359.5 212.2L1359.6 211.3L1359.7 210.3L1359.9 209.4L1359.9 208.6L1359.8 207.7L1359.7 207.0L1359.3 206.2L1358.9 205.4L1358.4 204.7L1357.9 203.9L1357.4 203.1L1357.0 202.2L1356.7 201.4L1356.6 200.5L1356.7 199.6L1357.0 198.8L1357.4 197.9L1357.9 197.1L1358.4 196.3L1358.9 195.6L1359.3 194.8L1359.7 194.0L1359.8 193.3L1359.9 192.4L1359.9 191.6L1359.7 190.7L1359.6 189.7L1359.5 188.8L1359.5 187.9L1359.6 187.0L1359.9 186.1L1360.3 185.4L1360.9 184.7L1361.6 184.1L1362.4 183.6L1363.2 183.1L1364.0 182.6L1364.7 182.1L1365.4 181.6L1365.9 181.0L1366.3 180.3L1366.7 179.5L1367.0 178.6L1367.2 177.7L1367.5 176.8L1367.9 176.0L1368.4 175.2L1369.0 174.5L1369.7 174.0L1370.5 173.7L1371.4 173.4L1372.3 173.3L1373.3 173.2L1374.2 173.1L1375.1 173.0L1375.9 172.8L1376.7 172.5L1377.3 172.1L1378.0 171.5L1378.6 170.9L1379.3 170.2L1379.9 169.5L1380.6 168.9L1381.4 168.4L1382.2 168.0L1383.1 167.9L1383.9 167.8L1384.9 168.0L1385.8 168.3L1386.6 168.6L1387.5 168.9L1388.4 169.2L1389.2 169.4L1390.0 169.5L1390.8 169.4L1391.6 169.2L1392.5 168.9L1393.4 168.6L1394.2 168.3L1395.1 168.0L1396.1 167.8L1396.9 167.9L1397.8 168.0L1398.6 168.4L1399.4 168.9L1400.1 169.5L1400.7 170.2L1401.4 170.9L1402.0 171.5L1402.7 172.1L1403.3 172.5L1404.1 172.8L1404.9 173.0L1405.8 173.1L1406.7 173.2L1407.7 173.3L1408.6 173.4L1409.5 173.7L1410.3 174.0L1411.0 174.5L1411.6 175.2L1412.1 176.0L1412.5 176.8L1412.8 177.7L1413.0 178.6L1413.3 179.5L1413.7 180.3L1414.1 181.0L1414.6 181.6L1415.3 182.1L1416.0 182.6L1416.8 183.1L1417.6 183.6L1418.4 184.1L1419.1 184.7L1419.7 185.4L1420.1 186.1L1420.4 187.0L1420.5 187.9L1420.5 188.8L1420.4 189.7L1420.3 190.7L1420.1 191.6L1420.1 192.4L1420.2 193.3L1420.3 194.0L1420.7 194.8L1421.1 195.6L1421.6 196.3L1422.1 197.1L1422.6 197.9L1423.0 198.8L1423.3 199.6z" fill="url(#g5)"/>
  <g fill="none" stroke="#f0d478" stroke-width="2.300" stroke-linejoin="round"><rect x="1382" y="176" width="15" height="12.500"/><path d="M1385 180h9M1385 184.500h9M1389.500 176v12.500"/><rect x="1383" y="191" width="13" height="5.500" fill="#f0d478" stroke="none"/><path d="M1377.500 184.500c-5.500 1-7-7-1.500-7.500 4 0 4.500 4 2 4.500M1401.500 184.500c5.500 1 7-7 1.500-7.500-4 0-4.500 4-2 4.500M1377.500 181c0 9 1 15 8 17M1401.500 181c0 9-1 15-8 17M1380 199h19M1385.500 199v4l-6 3.500M1393.500 199v4l6 3.500"/></g>
  <text x="1365" y="220" font-size="12.500" font-weight="900" fill="#f0d070" font-family="'Liberation Sans','Noto Sans CJK SC',sans-serif">金鼎</text>
  <path d="M1372 228c2-2 4-1 5 0s3 1 4 0" fill="none" stroke="#b8a468" stroke-width=".8"/>
</svg>

<svg class="abs" style="left:1345px;top:248px;z-index:2" width="86" height="86" viewBox="1345 248 86 86">
  <path d="M1422.5 290.0L1423.1 290.6L1423.6 291.3L1424.1 291.9L1424.5 292.6L1424.8 293.3L1425.0 294.0L1425.1 294.7L1425.1 295.4L1425.0 296.0L1424.7 296.7L1424.4 297.3L1423.9 297.8L1423.3 298.4L1422.7 298.9L1422.0 299.4L1421.3 299.8L1421.3 300.5L1421.6 301.3L1421.9 302.0L1422.2 302.8L1422.3 303.6L1422.4 304.3L1422.3 305.0L1422.2 305.7L1421.9 306.3L1421.5 306.8L1421.0 307.3L1420.4 307.8L1419.8 308.2L1419.0 308.5L1418.3 308.8L1417.5 309.0L1416.9 309.4L1417.0 310.3L1417.1 311.1L1417.1 311.9L1417.1 312.7L1417.0 313.4L1416.8 314.1L1416.5 314.7L1416.1 315.3L1415.6 315.7L1415.0 316.1L1414.3 316.4L1413.6 316.6L1412.8 316.7L1412.0 316.8L1411.2 316.8L1410.3 316.8L1410.2 317.6L1410.0 318.4L1409.8 319.2L1409.6 320.0L1409.3 320.7L1408.9 321.3L1408.5 321.8L1408.0 322.3L1407.4 322.6L1406.7 322.9L1406.0 323.0L1405.3 323.0L1404.5 323.0L1403.7 322.8L1402.9 322.7L1402.1 322.4L1401.6 322.7L1401.2 323.5L1400.8 324.2L1400.4 324.9L1399.9 325.5L1399.4 326.0L1398.9 326.5L1398.2 326.8L1397.6 327.0L1396.9 327.1L1396.2 327.1L1395.5 326.9L1394.8 326.7L1394.1 326.4L1393.3 326.0L1392.6 325.5L1392.0 325.3L1391.4 325.9L1390.8 326.5L1390.2 327.1L1389.6 327.6L1389.0 328.0L1388.3 328.3L1387.7 328.4L1387.0 328.5L1386.3 328.4L1385.7 328.3L1385.0 328.0L1384.4 327.6L1383.8 327.1L1383.2 326.5L1382.6 325.9L1382.0 325.3L1381.4 325.5L1380.7 326.0L1379.9 326.4L1379.2 326.7L1378.5 326.9L1377.8 327.1L1377.1 327.1L1376.4 327.0L1375.8 326.8L1375.1 326.5L1374.6 326.0L1374.1 325.5L1373.6 324.9L1373.2 324.2L1372.8 323.5L1372.4 322.7L1371.9 322.4L1371.1 322.7L1370.3 322.8L1369.5 323.0L1368.7 323.0L1368.0 323.0L1367.3 322.9L1366.6 322.6L1366.0 322.3L1365.5 321.8L1365.1 321.3L1364.7 320.7L1364.4 320.0L1364.2 319.2L1364.0 318.4L1363.8 317.6L1363.7 316.8L1362.8 316.8L1362.0 316.8L1361.2 316.7L1360.4 316.6L1359.7 316.4L1359.0 316.1L1358.4 315.7L1357.9 315.3L1357.5 314.7L1357.2 314.1L1357.0 313.4L1356.9 312.7L1356.9 311.9L1356.9 311.1L1357.0 310.3L1357.1 309.4L1356.5 309.0L1355.7 308.8L1355.0 308.5L1354.2 308.2L1353.6 307.8L1353.0 307.3L1352.5 306.8L1352.1 306.3L1351.8 305.7L1351.7 305.0L1351.6 304.3L1351.7 303.6L1351.8 302.8L1352.1 302.0L1352.4 301.3L1352.7 300.5L1352.7 299.8L1352.0 299.4L1351.3 298.9L1350.7 298.4L1350.1 297.8L1349.6 297.3L1349.3 296.7L1349.0 296.0L1348.9 295.4L1348.9 294.7L1349.0 294.0L1349.2 293.3L1349.5 292.6L1349.9 291.9L1350.4 291.3L1350.9 290.6L1351.5 290.0L1350.9 289.4L1350.4 288.7L1349.9 288.1L1349.5 287.4L1349.2 286.7L1349.0 286.0L1348.9 285.3L1348.9 284.6L1349.0 284.0L1349.3 283.3L1349.6 282.7L1350.1 282.2L1350.7 281.6L1351.3 281.1L1352.0 280.6L1352.7 280.2L1352.7 279.5L1352.4 278.7L1352.1 278.0L1351.8 277.2L1351.7 276.4L1351.6 275.7L1351.7 275.0L1351.8 274.3L1352.1 273.7L1352.5 273.2L1353.0 272.7L1353.6 272.2L1354.2 271.8L1355.0 271.5L1355.7 271.2L1356.5 271.0L1357.1 270.6L1357.0 269.7L1356.9 268.9L1356.9 268.1L1356.9 267.3L1357.0 266.6L1357.2 265.9L1357.5 265.3L1357.9 264.7L1358.4 264.3L1359.0 263.9L1359.7 263.6L1360.4 263.4L1361.2 263.3L1362.0 263.2L1362.8 263.2L1363.7 263.2L1363.8 262.4L1364.0 261.6L1364.2 260.8L1364.4 260.0L1364.7 259.3L1365.1 258.7L1365.5 258.2L1366.0 257.7L1366.6 257.4L1367.3 257.1L1368.0 257.0L1368.7 257.0L1369.5 257.0L1370.3 257.2L1371.1 257.3L1371.9 257.6L1372.4 257.3L1372.8 256.5L1373.2 255.8L1373.6 255.1L1374.1 254.5L1374.6 254.0L1375.1 253.5L1375.8 253.2L1376.4 253.0L1377.1 252.9L1377.8 252.9L1378.5 253.1L1379.2 253.3L1379.9 253.6L1380.7 254.0L1381.4 254.5L1382.0 254.7L1382.6 254.1L1383.2 253.5L1383.8 252.9L1384.4 252.4L1385.0 252.0L1385.7 251.7L1386.3 251.6L1387.0 251.5L1387.7 251.6L1388.3 251.7L1389.0 252.0L1389.6 252.4L1390.2 252.9L1390.8 253.5L1391.4 254.1L1392.0 254.7L1392.6 254.5L1393.3 254.0L1394.1 253.6L1394.8 253.3L1395.5 253.1L1396.2 252.9L1396.9 252.9L1397.6 253.0L1398.2 253.2L1398.9 253.5L1399.4 254.0L1399.9 254.5L1400.4 255.1L1400.8 255.8L1401.2 256.5L1401.6 257.3L1402.1 257.6L1402.9 257.3L1403.7 257.2L1404.5 257.0L1405.3 257.0L1406.0 257.0L1406.7 257.1L1407.4 257.4L1408.0 257.7L1408.5 258.2L1408.9 258.7L1409.3 259.3L1409.6 260.0L1409.8 260.8L1410.0 261.6L1410.2 262.4L1410.3 263.2L1411.2 263.2L1412.0 263.2L1412.8 263.3L1413.6 263.4L1414.3 263.6L1415.0 263.9L1415.6 264.3L1416.1 264.7L1416.5 265.3L1416.8 265.9L1417.0 266.6L1417.1 267.3L1417.1 268.1L1417.1 268.9L1417.0 269.7L1416.9 270.6L1417.5 271.0L1418.3 271.2L1419.0 271.5L1419.8 271.8L1420.4 272.2L1421.0 272.7L1421.5 273.2L1421.9 273.7L1422.2 274.3L1422.3 275.0L1422.4 275.7L1422.3 276.4L1422.2 277.2L1421.9 278.0L1421.6 278.7L1421.3 279.5L1421.3 280.2L1422.0 280.6L1422.7 281.1L1423.3 281.6L1423.9 282.2L1424.4 282.7L1424.7 283.3L1425.0 284.0L1425.1 284.6L1425.1 285.3L1425.0 286.0L1424.8 286.7L1424.5 287.4L1424.1 288.1L1423.6 288.7L1423.1 289.4z" fill="#0c0c0e"/>
  <circle cx="1387" cy="290" r="33.500" fill="#f0ead8"/>
  <circle cx="1387" cy="290" r="31.300" fill="#16130e"/>
  <circle cx="1387" cy="290" r="27.500" fill="none" stroke="#6c6250" stroke-width=".7"/>
  <text x="1371" y="284.500" font-size="13.500" font-weight="900" fill="#e8b848" font-family="'Liberation Sans','Noto Sans CJK SC',sans-serif">嗨皮</text>
  <path d="M1351 290h72v15.500h-72z" fill="#070707" stroke="#d8d0bc" stroke-width=".9"/>
  <text x="1367" y="303" font-size="13.500" font-weight="900" font-style="italic" fill="#fff" font-family="'Liberation Sans','Noto Sans CJK SC',sans-serif">跑分</text>
  <path d="M1378.0 309.6L1378.6 311.2L1380.3 311.3L1379.0 312.3L1379.4 313.9L1378.0 313.0L1376.6 313.9L1377.0 312.3L1375.7 311.3L1377.4 311.2zM1383.6 309.6L1384.2 311.2L1385.9 311.3L1384.6 312.3L1385.0 313.9L1383.6 313.0L1382.2 313.9L1382.6 312.3L1381.3 311.3L1383.0 311.2zM1389.2 309.6L1389.8 311.2L1391.5 311.3L1390.2 312.3L1390.6 313.9L1389.2 313.0L1387.8 313.9L1388.2 312.3L1386.9 311.3L1388.6 311.2zM1394.8 309.6L1395.4 311.2L1397.1 311.3L1395.8 312.3L1396.2 313.9L1394.8 313.0L1393.4 313.9L1393.8 312.3L1392.5 311.3L1394.2 311.2zM1400.4 309.6L1401.0 311.2L1402.7 311.3L1401.4 312.3L1401.8 313.9L1400.4 313.0L1399.0 313.9L1399.4 312.3L1398.1 311.3L1399.8 311.2z" fill="#e8e4d8"/>
</svg>

<svg class="abs" style="left:1345px;top:343px;z-index:2" width="86" height="86" viewBox="1345 343 86 86">
  <defs><linearGradient id="g6" x1="0" y1="0" x2="1" y2="1"><stop offset="0" stop-color="#e8c878"/><stop offset=".5" stop-color="#8c6820"/><stop offset="1" stop-color="#d8b060"/></linearGradient></defs>
  <circle cx="1387.500" cy="385.700" r="38.500" fill="url(#g6)"/>
  <circle cx="1387.500" cy="385.700" r="35.800" fill="#252525"/>
  <path d="M1370 372c2-2 4-1 6-1 5-4 12-6 22-5 4 0 8 1 10 3-6 0-10 2-13 5-3 4-4 9-3 14l-3 2c-2-5-1-10 1-14-3 1-6 3-8 6l-3-1c1-3 2-5 4-6-4 0-8 0-10-3z" fill="#f6d01c"/>
  <text x="1363.500" y="411.500" font-size="13" font-weight="bold" letter-spacing="1.500" font-family="'Liberation Sans','Noto Sans CJK SC',sans-serif"><tspan fill="#f6c41c">K</tspan><tspan fill="#fff">GC</tspan></text>
</svg>

<svg class="abs" style="left:1346px;top:434px;z-index:2" width="84" height="84" viewBox="1346 434 84 84">
  <defs><linearGradient id="g7" x1="0" y1="0" x2="1" y2="1"><stop offset="0" stop-color="#f0d4c4"/><stop offset=".5" stop-color="#a88878"/><stop offset="1" stop-color="#e4c4b4"/></linearGradient>
  <linearGradient id="g8" x1="0" y1="0" x2="1" y2="1"><stop offset="0" stop-color="#3a3634"/><stop offset=".35" stop-color="#0c0c0c"/><stop offset="1" stop-color="#141414"/></linearGradient></defs>
  <circle cx="1388" cy="475.400" r="36.500" fill="url(#g7)"/>
  <circle cx="1388" cy="475.400" r="33.800" fill="url(#g8)"/>
  <path d="M1384 466v12M1371 475c5 10 22 12 32 2" fill="none" stroke="#f4ece4" stroke-width="3.400" stroke-linecap="round"/>
  <text x="1376" y="495" font-size="9.500" font-weight="bold" fill="#e8e4e0" font-family="'Liberation Sans','Noto Sans CJK SC',sans-serif">存款</text>
  <text x="1376.500" y="505" font-size="8" fill="#b8b4b0" font-family="'Liberation Sans','Noto Sans CJK SC',sans-serif">计划</text>
</svg>

<!-- watermark -->
<div id="wm" class="abs">
  <div class="abs" style="left:51px;top:6px;font-size:25px;line-height:30px;white-space:nowrap;letter-spacing:1px">合吧</div>
  <div class="abs" style="left:189px;top:4px;font-size:25px;line-height:30px;white-space:nowrap;letter-spacing:1px">论坛</div>
  <svg class="abs" style="left:50px;top:10px" width="170" height="60" viewBox="1200 50 170 60"><g fill="none" stroke="#7c7f86" stroke-linecap="round">
<path d="M1206 86c-2-5 3-9 7-6 3 3 0 7-3 6" stroke-width="2.600"/>
<path d="M1214 93c8-13 30-17 42-6-8-3-18-1-24 5-5 5-12 6-18 1z" fill="#7c7f86" stroke-width="1"/>
<path d="M1240 100c6 2 12-2 10-8" stroke-width="2.600"/>
<path d="M1258 82c4-6 12-8 18-4 6 5 4 14-4 14" stroke-width="3"/>
<path d="M1272 62c-5 8-3 18 5 24 8 7 10 14 6 22" stroke-width="3.200"/>
<path d="M1276 72c-6-2-9-8-6-14M1284 80c-8-3-12-9-10-16" stroke-width="2.200"/>
<path d="M1322 58c5 8 3 18-5 24-8 7-12 14-12 24" stroke-width="3.200"/>
<path d="M1318 70c6-2 9-8 6-14M1310 78c8-3 12-9 10-16" stroke-width="2.200"/>
<path d="M1296 86c2 8 10 10 16 6 8-6 4-16-4-14" stroke-width="3"/>
<path d="M1288 92c4 4 4 10 0 14M1300 94c-2 6 0 10 4 12" stroke-width="2.400"/>
<path d="M1326 84c6-10 20-12 28-4 4 5 0 11-5 9" stroke-width="3"/>
<path d="M1338 98c4-8 14-12 24-8-8 0-12 4-16 10z" fill="#7c7f86" stroke-width="1"/>
</g></svg>
  <div class="abs" style="left:14px;top:49px;width:268px;height:59px;border:2.500px solid #7c7f86;border-radius:24px"></div>
  <div class="abs" style="left:33px;top:60px;font-size:37px;line-height:46px;white-space:nowrap">回家</div>
  <div class="abs" style="left:110px;top:52px;font-size:48px;line-height:56px;white-space:nowrap;font-family:'Liberation Sans',sans-serif;font-weight:bold;-webkit-text-stroke:2px #7c7f86;letter-spacing:1.500px">14.com</div>
</div>

<!-- float buttons -->
<div class="abs" style="z-index:3;left:1384px;top:204px;width:50px;height:50px;border-radius:7px 4px 0 0;background:linear-gradient(180deg,#4aa2f6,#5a9cf2);color:#fff;font-weight:bold;text-align:center;white-space:nowrap;overflow:hidden">
  <div class="abs" style="left:-1px;top:11px;width:50px;font-size:17.5px;line-height:20px">nicai</div>
  <div class="abs" style="left:10px;top:10px;width:0;height:0;border-left:3px solid transparent;border-right:3px solid transparent;border-bottom:8px solid #d8407c;transform:rotate(35deg)"></div><div class="abs" style="left:14px;top:8px;width:8px;height:2px;background:#3c9c5c;transform:rotate(-20deg)"></div>
  <div class="abs" style="left:0;top:32px;width:50px;font-size:12px;line-height:16px">奖源认证</div>
</div>
<div class="fb" style="top:260px"><svg width="20" height="20" viewBox="0 0 20 20"><path d="M3 13V9.500a7 7 0 0114 0V13" fill="none" stroke="#4a9af5" stroke-width="2"/><rect x="1.500" y="10" width="4.500" height="7.500" rx="1.800" fill="#4a9af5"/><rect x="14" y="10" width="4.500" height="7.500" rx="1.800" fill="#4a9af5"/></svg><span>客服</span></div>
<div class="fb" style="top:316px"><svg width="20" height="20" viewBox="0 0 20 20"><path d="M5 3h10l4 5-9 10L1 8z" fill="none" stroke="#4a9af5" stroke-width="1.600" stroke-linejoin="round"/><path d="M1 8h18M7 8l3 10 3-10M5 3l2 5 3-5 3 5 2-5" fill="none" stroke="#4a9af5" stroke-width="1.300" stroke-linejoin="round"/></svg><span>挂机</span></div>
<div class="fb" style="top:372px"><svg width="20" height="20" viewBox="0 0 20 20"><circle cx="10" cy="6.500" r="4" fill="none" stroke="#4a9af5" stroke-width="1.800"/><path d="M2.500 17.500c0-4 3-5.500 7.500-5.500s7.500 1.500 7.500 5.500z" fill="none" stroke="#4a9af5" stroke-width="1.800" stroke-linejoin="round"/></svg><span>我的</span></div>
<div class="fb" style="top:428px"><svg width="20" height="20" viewBox="0 0 20 20"><path d="M10 3c4.500 0 8 2.700 8 6.200s-3.500 6.200-8 6.200c-1 0-2-.1-2.800-.4L3.500 17l.8-3.200C2.900 12.700 2 11 2 9.200 2 5.700 5.500 3 10 3z" fill="none" stroke="#4a9af5" stroke-width="1.700" stroke-linejoin="round"/><circle cx="6.500" cy="9.200" r="1.100" fill="#4a9af5"/><circle cx="10" cy="9.200" r="1.100" fill="#4a9af5"/><circle cx="13.500" cy="9.200" r="1.100" fill="#4a9af5"/></svg><span>聊天</span></div>
<div class="fb" style="top:484px"><svg width="20" height="20" viewBox="0 0 20 20"><circle cx="10" cy="10" r="8.500" fill="#4a9af5"/><rect x="8.800" y="4.500" width="2.400" height="7" rx="1" fill="#fff"/><circle cx="10" cy="14.300" r="1.400" fill="#fff"/></svg><span>帮助</span></div>
<div class="fb" style="top:540px"><svg width="20" height="20" viewBox="0 0 20 20"><path d="M1 7.500h3.500L10 3v14l-5.500-4.500H1z" fill="#4a9af5"/><path d="M12.500 7.500l5 5m0-5l-5 5" stroke="#4a9af5" stroke-width="2"/></svg><span>声音</span></div>
<div class="fb" style="top:596px"><svg width="20" height="20" viewBox="0 0 20 20"><circle cx="10" cy="10" r="8" fill="none" stroke="#4a9af5" stroke-width="1.700"/><path d="M10 14.500V6.500M6.500 9.800L10 6l3.500 3.800" fill="none" stroke="#4a9af5" stroke-width="1.900"/></svg><span>顶部</span></div>
<div class="abs" style="left:1434px;top:4px;width:3px;height:773px;background:#e6eff8;z-index:3"></div><div class="abs" style="left:1434px;top:70px;width:3px;height:491px;background:#4c9cf6;z-index:3"></div>
</body>
</html>
